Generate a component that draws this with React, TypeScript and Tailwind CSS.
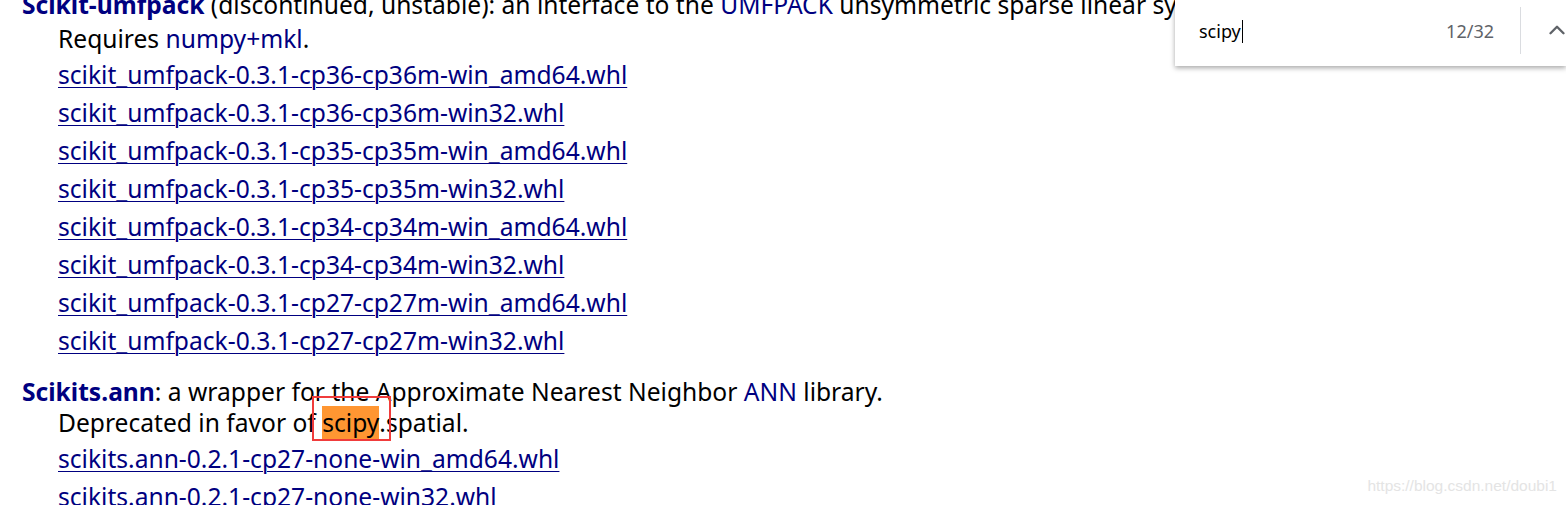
import { ChevronUp } from "lucide-react";

const umfpackFiles = [
  "scikit_umfpack-0.3.1-cp36-cp36m-win_amd64.whl",
  "scikit_umfpack-0.3.1-cp36-cp36m-win32.whl",
  "scikit_umfpack-0.3.1-cp35-cp35m-win_amd64.whl",
  "scikit_umfpack-0.3.1-cp35-cp35m-win32.whl",
  "scikit_umfpack-0.3.1-cp34-cp34m-win_amd64.whl",
  "scikit_umfpack-0.3.1-cp34-cp34m-win32.whl",
  "scikit_umfpack-0.3.1-cp27-cp27m-win_amd64.whl",
  "scikit_umfpack-0.3.1-cp27-cp27m-win32.whl",
];

const annFiles = [
  "scikits.ann-0.2.1-cp27-none-win_amd64.whl",
  "scikits.ann-0.2.1-cp27-none-win32.whl",
];

function FileLink({ name }: { name: string }) {
  return (
    <a href="#" className="block h-[38px] leading-[38px] text-[#000080] underline underline-offset-[3px] decoration-1">
      {name}
    </a>
  );
}

export default function App() {
  return (
    <div className="relative h-[505px] w-[1566px] overflow-hidden bg-white text-black" style={{ fontFamily: '"Noto Sans", sans-serif' }}>
      <div className="-mt-[11px] pl-[22px] text-[24.6px] whitespace-nowrap">
        {/* Scikit-umfpack */}
        <div className="leading-[31px]">
          <strong className="text-[#000080]">Scikit-umfpack</strong> (discontinued, unstable): an interface to the{" "}
          <span className="text-[#000080]">UMFPACK</span> unsymmetric sparse linear systems solver.
        </div>
        <div className="pl-[36px]">
          <div className="pt-[3px] leading-[31px]">
            Requires <span className="text-[#000080]">numpy+mkl</span>.
          </div>
          <div className="pt-[2px]">
            {umfpackFiles.map((f) => (
              <FileLink key={f} name={f} />
            ))}
          </div>
        </div>

        {/* Scikits.ann */}
        <div className="mt-[16px] leading-[31px]">
          <strong className="text-[#000080]">Scikits.ann</strong>: a wrapper for the Approximate Nearest Neighbor{" "}
          <span className="text-[#000080]">ANN</span> library.
        </div>
        <div className="pl-[36px]">
          <div className="leading-[31px]">
            Deprecated in favor of{" "}
            <span className="relative inline-block">
              <span className="bg-[#ff9632]">scipy</span>
              <span className="absolute -left-[10px] -right-[12px] -top-[11px] -bottom-[3px] border-2 border-[#f03c3c]" />
            </span>
            .spatial.
          </div>
          <div className="pt-[2px]">
            {annFiles.map((f) => (
              <FileLink key={f} name={f} />
            ))}
          </div>
        </div>
      </div>

      {/* find bar */}
      <div className="absolute right-0 top-0 flex h-[66px] w-[391px] items-center bg-white shadow-[0_2px_5px_rgba(0,0,0,0.35)]">
        <div className="flex flex-1 items-center pl-[24px] pb-[4px] text-[18px]" style={{ fontFamily: '"Noto Sans", sans-serif' }}>
          <span>scipy</span>
          <span className="ml-[1px] h-[23px] w-px bg-black" />
          <span className="ml-auto mr-[26px] text-[#5f6368]">12/32</span>
        </div>
        <div className="mb-[5px] h-[47px] w-px bg-[#dadce0]" />
        <div className="flex w-[45px] items-center justify-end pb-[6px]">
          <ChevronUp size={26} strokeWidth={2.2} className="-mr-[4px] text-[#5f6368]" />
        </div>
      </div>

      {/* watermark */}
      <div className="absolute bottom-[8px] right-[9px] text-[15.5px] text-[#e4e4e4]" style={{ fontFamily: '"Liberation Sans", sans-serif' }}>
        https://blog.csdn.net/doubi1
      </div>
    </div>
  );
}
